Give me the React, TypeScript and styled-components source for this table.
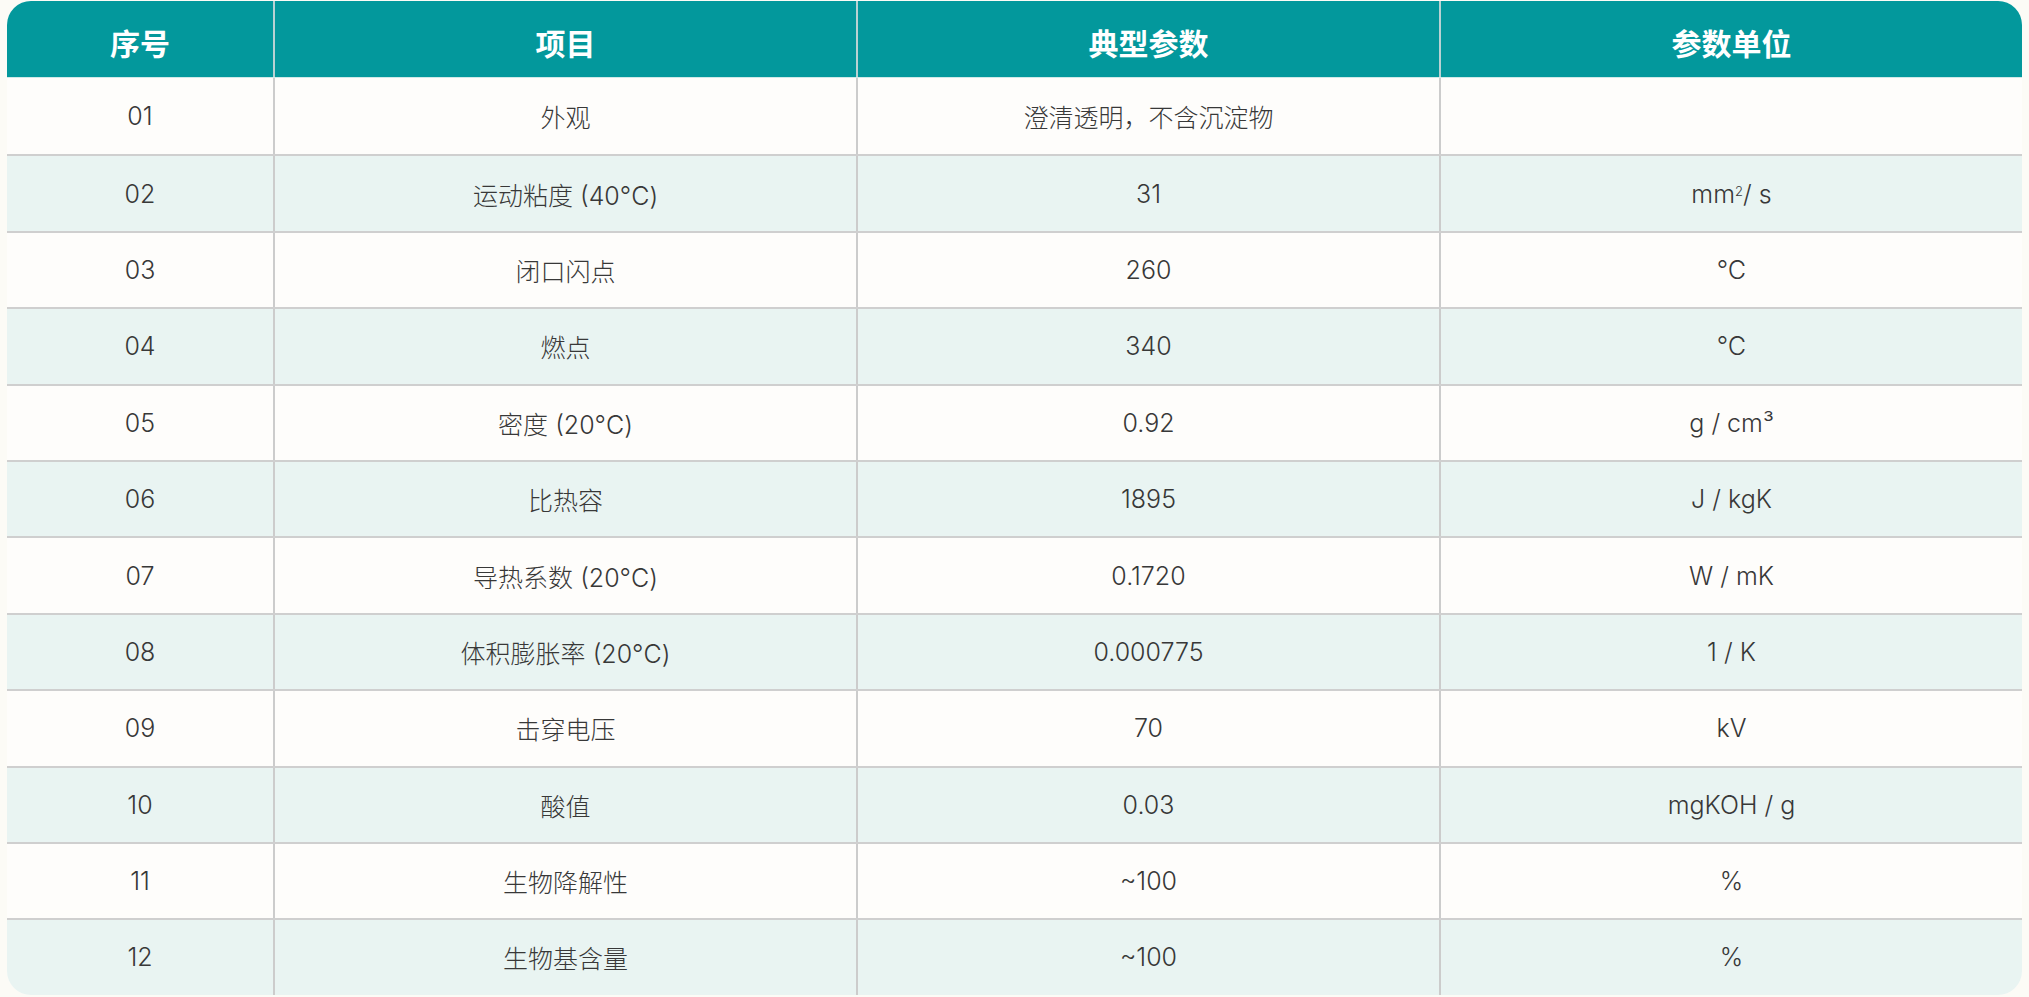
import styled, { createGlobalStyle } from 'styled-components'

const rows: [string, string, string, React.ReactNode][] = [
  ['01', '外观', '澄清透明，不含沉淀物', ''],
  ['02', '运动粘度 (40°C)', '31', <>mm<sup>2</sup>/ s</>],
  ['03', '闭口闪点', '260', '℃'],
  ['04', '燃点', '340', '℃'],
  ['05', '密度 (20°C)', '0.92', 'g / cm³'],
  ['06', '比热容', '1895', 'J / kgK'],
  ['07', '导热系数 (20°C)', '0.1720', 'W / mK'],
  ['08', '体积膨胀率 (20°C)', '0.000775', '1 / K'],
  ['09', '击穿电压', '70', 'kV'],
  ['10', '酸值', '0.03', 'mgKOH / g'],
  ['11', '生物降解性', '~100', '%'],
  ['12', '生物基含量', '~100', '%'],
]

const heads = ['序号', '项目', '典型参数', '参数单位']

const GlobalStyle = createGlobalStyle`
  html, body {
    margin: 0;
    background: #fcfbf6;
  }
`

const Page = styled.div`
  padding: 1px 7px 2px;
  font-family: Inter, 'Noto Sans CJK SC', sans-serif;
`

const Card = styled.div`
  border-radius: 24px;
  overflow: hidden;
  background: #fefdfb;
`

const Row = styled.div<{ $tint?: boolean }>`
  display: grid;
  grid-template-columns: 266fr 583fr 583fr 583fr;
  box-sizing: border-box;
  height: 76.4px;
  background: ${(p) => (p.$tint ? '#e9f4f2' : '#fefdfb')};

  & + & {
    border-top: 2px solid #cfcfcf;
  }
`

const HeadRow = styled.div`
  display: grid;
  grid-template-columns: 266fr 583fr 583fr 583fr;
  height: 77px;
  background: #03989c;
  border-bottom: 1px solid #cfe9e8;
  box-sizing: border-box;
`

const HeadCell = styled.div`
  display: flex;
  align-items: center;
  justify-content: center;
  padding-top: 6px;
  color: #fff;
  font-family: 'Noto Sans CJK SC', sans-serif;
  font-size: 30px;
  font-weight: 700;

  & + & {
    border-left: 2px solid #b9d2d3;
  }
`

const Cell = styled.div`
  display: flex;
  align-items: center;
  justify-content: center;
  color: #383838;
  font-size: 25px;
  font-weight: 300;

  & + & {
    border-left: 2px solid #cccccc;
  }

  sup {
    font-size: 13px;
    line-height: 0;
    position: relative;
    top: -3px;
    vertical-align: super;
  }
`

export default function App() {
  return (
    <Page>
      <GlobalStyle />
      <Card>
        <HeadRow>
          {heads.map((h) => (
            <HeadCell key={h}>{h}</HeadCell>
          ))}
        </HeadRow>
        {rows.map((r, i) => (
          <Row key={r[0]} $tint={i % 2 === 1}>
            <Cell>{r[0]}</Cell>
            <Cell>{r[1]}</Cell>
            <Cell>{r[2]}</Cell>
            <Cell>{r[3]}</Cell>
          </Row>
        ))}
      </Card>
    </Page>
  )
}
